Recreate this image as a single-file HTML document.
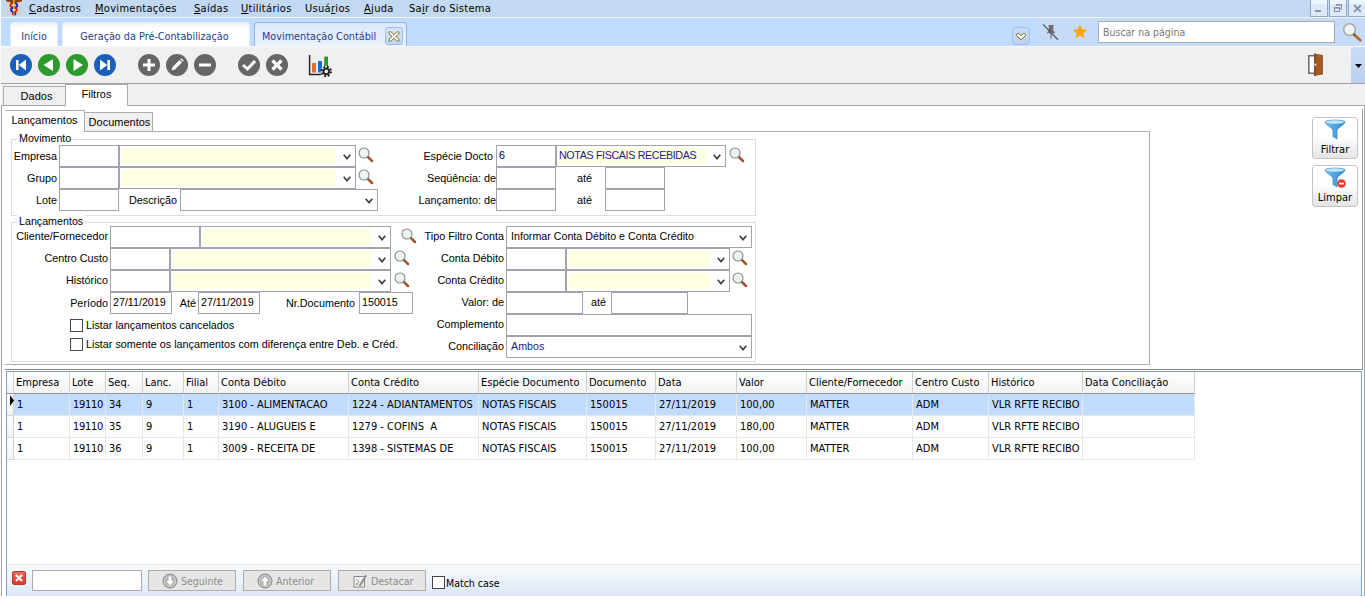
<!DOCTYPE html>
<html><head><meta charset="utf-8"><title>Movimentação Contábil</title>
<style>
*{box-sizing:border-box;margin:0;padding:0}
html,body{width:1365px;height:599px;overflow:hidden;background:#fff;font-family:"Liberation Sans",sans-serif;font-size:10.7px;color:#000}
.a{position:absolute}
.seg{font-family:"DejaVu Sans Condensed","Liberation Sans",sans-serif;font-size:10.5px}
#menubar{left:0;top:0;width:1365px;height:18px;background:#c3d9f1;border-bottom:1px solid #eef4fc}
#menubar span{position:absolute;top:1px;font-family:"DejaVu Sans Condensed","Liberation Sans",sans-serif;font-size:11px;letter-spacing:.3px;line-height:16px;white-space:nowrap;color:#000}
#tabbar{left:0;top:18px;width:1365px;height:28px;background:#bfdbff}
.ttab{position:absolute;top:4px;height:24px;border:1px solid #e2eeff;border-bottom:none;border-radius:4px 4px 0 0;background:linear-gradient(#f3f3f3,#fff 5px);font-family:"DejaVu Sans Condensed","Liberation Sans",sans-serif;font-size:10.75px;line-height:27px;color:#25408f;white-space:nowrap;text-align:center}
#toolbar{left:0;top:46px;width:1365px;height:37px;background:#f0f0f0;box-shadow:inset 0 1px 0 #f9f9f9}
#tbline{left:0;top:83px;width:1365px;height:1px;background:#a0a0a0}
#sub{left:0;top:84px;width:1365px;height:515px;background:#f0f0f0}
.lbl{position:absolute;white-space:nowrap;font-size:10.8px;line-height:13px;text-align:right}
.in{position:absolute;height:22px;border:1px solid #a3a3ad;background:#fff;font-size:10.7px;line-height:18px;padding-left:2px;white-space:nowrap;overflow:hidden}
.cb{position:absolute;height:22px;border:1px solid #a3a3ad;background:#fff}
.cb i{position:absolute;left:2px;top:2px;bottom:2px;right:19px;background:#ffffe1;font-style:normal;font-size:10.7px;line-height:15px;padding-left:1px;white-space:nowrap;color:#1a1a8c;overflow:hidden}
.cb.w i{background:#fff;padding-left:2px}
.cb svg{position:absolute;right:4px;top:8px}
.gb{position:absolute;border:1px solid #dcdcdc}
.gb>b{position:absolute;left:5px;top:-8px;background:#fff;padding:0 2px;font-weight:normal;font-size:10.7px;line-height:13px}
.mag{position:absolute;width:16px;height:16px}
.ck{position:absolute;width:13px;height:13px;border:1px solid #4a4a4a;background:#fff}
.tb{position:absolute;width:22px;height:22px;top:8px}
.gh{position:absolute;top:0;height:22px;border-right:1px solid #d0d0d0;border-bottom:1px solid #959595;background:linear-gradient(#ffffff,#f3f3f3);font-size:11px;line-height:21px;padding-left:2px;white-space:nowrap;overflow:hidden;font-family:"DejaVu Sans Condensed","Liberation Sans",sans-serif}
.gc{position:absolute;height:22px;border-right:1px solid #e8e8e8;border-bottom:1px solid #e8e8e8;font-size:11px;line-height:21px;padding-left:3px;white-space:nowrap;overflow:hidden}
.gfont{font-family:"Liberation Sans",sans-serif;}
.sbtn{position:absolute;top:5px;height:21px;border:1px solid #adadad;background:#e6e6e6;color:#8b8b8b;font-family:"DejaVu Sans Condensed","Liberation Sans",sans-serif;font-size:10.5px;line-height:19px;white-space:nowrap}
</style></head><body>
<div class="a" id="menubar">
<svg class="a" style="left:6px;top:0" width="16" height="16" viewBox="0 0 16 16"><rect width="16" height="16" fill="#d2d2d2"/><path d="M0 0 H16 V1.2 L11.5 2.6 L9 3.1 H6.6 L4.5 2.6 L0 1.2 Z" fill="#8b3d12"/><path d="M7.6 3.1 C3.6 3 3.4 6.9 7 7.4 C11.6 8 12 11 8.6 11.8 C6.4 12.4 6.2 13.8 7.8 14.9" stroke="#e41212" stroke-width="1.8" fill="none"/><path d="M8.4 3.3 C12.2 3.3 12.2 6.9 8.8 7.5 C4 8.2 3.8 11 7 11.8 C9.6 12.4 10.2 13.8 8.6 14.9" stroke="#1220e0" stroke-width="1.8" fill="none"/><path d="M7 7.4 C9 7.7 10 8 10.6 8.8" stroke="#e41212" stroke-width="1.8" fill="none"/><path d="M7.9 0 V12" stroke="#f2e200" stroke-width="1.1"/><path d="M7.9 12 V16" stroke="#f08a10" stroke-width="1.1"/></svg>
<span style="left:29px"><u>C</u>adastros</span>
<span style="left:95px"><u>M</u>ovimentações</span>
<span style="left:194px"><u>S</u>aídas</span>
<span style="left:241px"><u>U</u>tilitários</span>
<span style="left:305px">Usuá<u>r</u>ios</span>
<span style="left:364px"><u>A</u>juda</span>
<span style="left:409px">Sa<u>i</u>r do Sistema</span>
<div class="a" style="left:1310px;top:-1px;width:18px;height:18px;border:1px solid #93a8c6;background:linear-gradient(#ecf4fc 0,#ecf4fc 4px,#dde9f8 4px)"></div>
<div class="a" style="left:1329px;top:-1px;width:18px;height:18px;border:1px solid #93a8c6;background:linear-gradient(#ecf4fc 0,#ecf4fc 4px,#dde9f8 4px)"></div>
<div class="a" style="left:1348px;top:-1px;width:18px;height:18px;border:1px solid #93a8c6;background:linear-gradient(#ecf4fc 0,#ecf4fc 4px,#dde9f8 4px)"></div>
<div class="a" style="left:1315px;top:10px;width:6px;height:2px;background:#8391a8"></div>
<svg class="a" style="left:1333px;top:3px" width="11" height="10" viewBox="0 0 11 10" fill="none" stroke="#8391a8"><path d="M3.5 3 V1.5 H8.5 V6 H7" stroke-width="1"/><path d="M3.5 1.8h5" stroke-width="1.4"/><rect x="1.5" y="4.5" width="5" height="4" /><path d="M1.5 4.8h5" stroke-width="1.6"/></svg>
<svg class="a" style="left:1353px;top:4px" width="9" height="9" viewBox="0 0 9 9"><path d="M1.2 1.2 L7.8 7.8 M7.8 1.2 L1.2 7.8" stroke="#8391a8" stroke-width="1.9"/></svg>
</div>
<div class="a" id="tabbar">
<div class="ttab" style="left:10px;width:48px">Início</div>
<div class="ttab" style="left:62px;width:188px;padding-right:3px">Geração da Pré-Contabilização</div>
<div class="ttab" style="left:254px;width:153px;background:linear-gradient(#dce9fb,#eaf2fd);border-color:#8fb4ea;text-align:left;padding-left:7px">Movimentação Contábil</div>
<div class="a" style="left:385px;top:9px;width:18px;height:18px;border:1px solid #9dbbe6;border-radius:3px;background:linear-gradient(#d4e3f8,#c6d8f2)"></div>
<svg class="a" style="left:388px;top:13px" width="12" height="11" viewBox="0 0 12 11"><path d="M2.2 2 L9.8 9 M9.8 2 L2.2 9" stroke="#7a6f2a" stroke-width="3.4" stroke-linecap="round"/><path d="M2.2 2 L9.8 9 M9.8 2 L2.2 9" stroke="#fff" stroke-width="1.7" stroke-linecap="round"/></svg>
<div class="a" style="left:1037px;top:0;width:328px;height:28px;background:#c5dbf8"></div>
<div class="a" style="left:1012px;top:9px;width:18px;height:18px;border:1px solid #a3c0ea;border-radius:4px;background:linear-gradient(#c6dcf9,#bdd0ea)"></div>
<svg class="a" style="left:1015px;top:14px" width="12" height="9" viewBox="0 0 12 9"><path d="M6 7.8 L1.7 3.9 C0.7 2.4 2.6 0.6 4.1 1.8 L6 3.5 L7.9 1.8 C9.4 0.6 11.3 2.4 10.3 3.9 Z" fill="#fff" stroke="#7a6f2a" stroke-width="1" stroke-linejoin="round"/></svg>
<svg class="a" style="left:1041px;top:5px" width="20" height="18" viewBox="0 0 20 18"><path d="M7.2 2 H13 L12.3 3 V7.5 L14 9.5 V10.3 H6 V9.5 L7.8 7.5 V3 Z" fill="#6e6e6e"/><path d="M10 10 V15.7" stroke="#7d8ea6" stroke-width="1.6"/><path d="M2 1.4 L17 16.8" stroke="#5a5a5a" stroke-width="1.3"/></svg>
<svg class="a" style="left:1072px;top:6px" width="16" height="15" viewBox="0 0 16 15"><path d="M8 0.6 L10.1 5.3 L15.3 5.8 L11.4 9.2 L12.5 14.2 L8 11.6 L3.5 14.2 L4.6 9.2 L0.7 5.8 L5.9 5.3 Z" fill="#ffa40a"/></svg>
<div class="a seg" style="left:1098px;top:3px;width:237px;height:22px;border:1px solid #a9abb1;background:#fff;line-height:20px;color:#777;padding-left:4px">Buscar na página</div>
<svg class="a" style="left:1341px;top:3px" width="22" height="22" viewBox="0 0 22 22"><path d="M13 13.5 L19.3 19.3" stroke="#b5651d" stroke-width="2.6" stroke-linecap="round"/><path d="M12.4 12.9 L13.6 14.1" stroke="#5a3210" stroke-width="2.6"/><circle cx="8.5" cy="8.6" r="5.8" fill="#eef2f2" stroke="#9aa8a2" stroke-width="1.4"/></svg>
</div>
<div class="a" id="toolbar">
<svg class="tb" style="left:10px" viewBox="0 0 22 22"><circle cx="11" cy="11" r="11" fill="#1a5fb8"/><rect x="6" y="6" width="2.6" height="10" fill="#fff"/><path d="M16 5.5 V16.5 L8.8 11 Z" fill="#fff"/></svg>
<svg class="tb" style="left:38px" viewBox="0 0 22 22"><circle cx="11" cy="11" r="11" fill="#2c9a2c"/><path d="M15 5 V17 L5.5 11 Z" fill="#fff"/></svg>
<svg class="tb" style="left:66px" viewBox="0 0 22 22"><circle cx="11" cy="11" r="11" fill="#2c9a2c"/><path d="M7.5 5 V17 L17 11 Z" fill="#fff"/></svg>
<svg class="tb" style="left:94px" viewBox="0 0 22 22"><circle cx="11" cy="11" r="11" fill="#1a5fb8"/><rect x="13.4" y="6" width="2.6" height="10" fill="#fff"/><path d="M6 5.5 V16.5 L13.2 11 Z" fill="#fff"/></svg>
<svg class="tb" style="left:138px" viewBox="0 0 22 22"><circle cx="11" cy="11" r="11" fill="#666"/><path d="M11 5 V17 M5 11 H17" stroke="#fff" stroke-width="3"/></svg>
<svg class="tb" style="left:166px" viewBox="0 0 22 22"><circle cx="11" cy="11" r="11" fill="#666"/><path d="M5.5 16.5 L6.5 13 L13.5 6 L16 8.5 L9 15.5 Z" fill="#fff"/><path d="M14.3 5.2 L15.3 4.2 L17.8 6.7 L16.8 7.7 Z" fill="#fff"/></svg>
<svg class="tb" style="left:194px" viewBox="0 0 22 22"><circle cx="11" cy="11" r="11" fill="#666"/><path d="M5 11 H17" stroke="#fff" stroke-width="3"/></svg>
<svg class="tb" style="left:238px" viewBox="0 0 22 22"><circle cx="11" cy="11" r="11" fill="#666"/><path d="M5 11 L9.5 15 L17 7" stroke="#fff" stroke-width="3" fill="none"/></svg>
<svg class="tb" style="left:266px" viewBox="0 0 22 22"><circle cx="11" cy="11" r="11" fill="#666"/><path d="M6.5 6.5 L15.5 15.5 M15.5 6.5 L6.5 15.5" stroke="#fff" stroke-width="3.2"/></svg>
<svg class="a" style="left:308px;top:8px" width="25" height="24" viewBox="0 0 25 24"><path d="M1.6 1 V20.6 H13" stroke="#222" stroke-width="1.5" fill="none"/><rect x="4" y="9" width="4" height="9.6" rx=".6" fill="#f26a1b"/><rect x="10" y="7" width="4" height="11.6" rx=".6" fill="#2168d0"/><rect x="16.2" y="2.4" width="3.8" height="10" rx=".6" fill="#2c9a2c"/><circle cx="18.3" cy="17.4" r="5.6" fill="#f0f0f0"/><circle cx="18.3" cy="17.4" r="4.5" fill="none" stroke="#222" stroke-width="2.2" stroke-dasharray="1.9 1.634"/><circle cx="18.3" cy="17.4" r="3.7" fill="#222"/><circle cx="18.3" cy="17.4" r="1.8" fill="#f0f0f0"/></svg>
<svg class="a" style="left:1307px;top:6px" width="18" height="26" viewBox="0 0 18 26"><rect x="1.8" y="3.7" width="6" height="17.6" fill="#fff" stroke="#686868" stroke-width="1.5"/><path d="M7 1.5 L16 3 V22.5 L7 24 Z" fill="#a4592a"/><path d="M7 1.5 L9 1.8 V23.7 L7 24 Z" fill="#8e4a20"/><rect x="7.6" y="11.6" width="1.6" height="2" fill="#fff"/></svg>
<div class="a" style="left:1351px;top:1px;width:14px;height:36px;border-radius:3px 0 0 0;background:linear-gradient(#c8dcf6,#b9cfee)"></div>
<svg class="a" style="left:1355px;top:18px" width="7" height="4" viewBox="0 0 7 4"><path d="M0 0 H7 L3.5 4 Z" fill="#000"/></svg>
</div><div class="a" id="tbline"></div>
<div class="a" id="sub">
<div class="a" style="left:3px;top:2px;width:63px;height:20px;border:1px solid #acacac;border-bottom:none;background:#f0f0f0;font-size:11px;line-height:19px;text-align:center;padding-left:4px">Dados</div>
<div class="a" style="left:1px;top:21px;width:1364px;height:500px;border:1px solid #a6a6a6;background:#fff"></div>
<div class="a" style="left:1362px;top:25px;width:1px;height:260px;background:#9a9a9a"></div>
<div class="a" style="left:65px;top:0px;width:63px;height:22px;border:1px solid #acacac;border-bottom:none;background:#fff;font-size:11px;line-height:19px;text-align:center">Filtros</div>
<div class="a" style="left:5px;top:47px;width:1145px;height:234px;border:1px solid #acacac;border-left:none;background:#fff"></div>
<div class="a" style="left:84px;top:28px;width:69px;height:20px;border:1px solid #acacac;background:#f0f0f0;font-size:11px;line-height:19px;text-align:center;padding-left:2px">Documentos</div>
<div class="a" style="left:5px;top:26px;width:80px;height:22px;border:1px solid #acacac;border-bottom:none;border-left:none;background:#fff;font-size:11px;line-height:19px;text-align:center">Lançamentos</div>
<div class="gb" style="left:11px;top:55px;width:745px;height:77px"><b>Movimento</b></div>
<div class="gb" style="left:11px;top:138px;width:745px;height:140px"><b>Lançamentos</b></div>
<div class="lbl" style="right:1308px;top:66px">Empresa</div>
<div class="in" style="left:59px;top:61px;width:60px"></div>
<div class="cb " style="left:119px;top:61px;width:237px"><i></i><svg width="8" height="6" viewBox="0 0 8 6"><path d="M0.7 0.8 L4 4.6 L7.3 0.8" stroke="#444" stroke-width="1.7" fill="none"/></svg></div>
<svg class="mag" style="left:358px;top:63px" viewBox="0 0 16 16"><path d="M9.3 9.3 L14 14" stroke="#a4532a" stroke-width="2.5" stroke-linecap="round"/><circle cx="6" cy="6" r="5" fill="#eef4f2" stroke="#7f8c8c" stroke-width="1.1"/></svg>
<div class="lbl" style="right:1308px;top:88px">Grupo</div>
<div class="in" style="left:59px;top:83px;width:60px"></div>
<div class="cb " style="left:119px;top:83px;width:237px"><i></i><svg width="8" height="6" viewBox="0 0 8 6"><path d="M0.7 0.8 L4 4.6 L7.3 0.8" stroke="#444" stroke-width="1.7" fill="none"/></svg></div>
<svg class="mag" style="left:358px;top:85px" viewBox="0 0 16 16"><path d="M9.3 9.3 L14 14" stroke="#a4532a" stroke-width="2.5" stroke-linecap="round"/><circle cx="6" cy="6" r="5" fill="#eef4f2" stroke="#7f8c8c" stroke-width="1.1"/></svg>
<div class="lbl" style="right:1308px;top:110px">Lote</div>
<div class="in" style="left:59px;top:105px;width:60px"></div>
<div class="lbl" style="right:1188px;top:110px">Descrição</div>
<div class="cb w" style="left:180px;top:105px;width:198px"><i></i><svg width="8" height="6" viewBox="0 0 8 6"><path d="M0.7 0.8 L4 4.6 L7.3 0.8" stroke="#444" stroke-width="1.7" fill="none"/></svg></div>
<div class="lbl" style="right:872px;top:66px">Espécie Docto</div>
<div class="in" style="left:496px;top:61px;width:60px">6</div>
<div class="cb " style="left:556px;top:61px;width:170px"><i><span style="letter-spacing:-.35px;margin-left:-1px">NOTAS FISCAIS RECEBIDAS</span></i><svg width="8" height="6" viewBox="0 0 8 6"><path d="M0.7 0.8 L4 4.6 L7.3 0.8" stroke="#444" stroke-width="1.7" fill="none"/></svg></div>
<svg class="mag" style="left:729px;top:63px" viewBox="0 0 16 16"><path d="M9.3 9.3 L14 14" stroke="#a4532a" stroke-width="2.5" stroke-linecap="round"/><circle cx="6" cy="6" r="5" fill="#eef4f2" stroke="#7f8c8c" stroke-width="1.1"/></svg>
<div class="lbl" style="right:869px;top:88px">Seqüência: de</div>
<div class="in" style="left:496px;top:83px;width:60px"></div>
<div class="lbl" style="left:577px;top:88px">até</div>
<div class="in" style="left:605px;top:83px;width:60px"></div>
<div class="lbl" style="right:869px;top:110px">Lançamento: de</div>
<div class="in" style="left:496px;top:105px;width:60px"></div>
<div class="lbl" style="left:577px;top:110px">até</div>
<div class="in" style="left:605px;top:105px;width:60px"></div>
<div class="lbl" style="right:1257px;top:146px">Cliente/Fornecedor</div>
<div class="in" style="left:110px;top:142px;width:90px"></div>
<div class="cb " style="left:200px;top:142px;width:191px"><i></i><svg width="8" height="6" viewBox="0 0 8 6"><path d="M0.7 0.8 L4 4.6 L7.3 0.8" stroke="#444" stroke-width="1.7" fill="none"/></svg></div>
<svg class="mag" style="left:401px;top:144px" viewBox="0 0 16 16"><path d="M9.3 9.3 L14 14" stroke="#a4532a" stroke-width="2.5" stroke-linecap="round"/><circle cx="6" cy="6" r="5" fill="#eef4f2" stroke="#7f8c8c" stroke-width="1.1"/></svg>
<div class="lbl" style="right:1257px;top:168px">Centro Custo</div>
<div class="in" style="left:110px;top:164px;width:60px"></div>
<div class="cb " style="left:170px;top:164px;width:221px"><i></i><svg width="8" height="6" viewBox="0 0 8 6"><path d="M0.7 0.8 L4 4.6 L7.3 0.8" stroke="#444" stroke-width="1.7" fill="none"/></svg></div>
<svg class="mag" style="left:394px;top:166px" viewBox="0 0 16 16"><path d="M9.3 9.3 L14 14" stroke="#a4532a" stroke-width="2.5" stroke-linecap="round"/><circle cx="6" cy="6" r="5" fill="#eef4f2" stroke="#7f8c8c" stroke-width="1.1"/></svg>
<div class="lbl" style="right:1257px;top:190px">Histórico</div>
<div class="in" style="left:110px;top:186px;width:60px"></div>
<div class="cb " style="left:170px;top:186px;width:221px"><i></i><svg width="8" height="6" viewBox="0 0 8 6"><path d="M0.7 0.8 L4 4.6 L7.3 0.8" stroke="#444" stroke-width="1.7" fill="none"/></svg></div>
<svg class="mag" style="left:394px;top:188px" viewBox="0 0 16 16"><path d="M9.3 9.3 L14 14" stroke="#a4532a" stroke-width="2.5" stroke-linecap="round"/><circle cx="6" cy="6" r="5" fill="#eef4f2" stroke="#7f8c8c" stroke-width="1.1"/></svg>
<div class="lbl" style="right:1257px;top:213px">Período</div>
<div class="in" style="left:110px;top:208px;width:62px">27/11/2019</div>
<div class="lbl" style="right:1169px;top:213px">Até</div>
<div class="in" style="left:198px;top:208px;width:62px">27/11/2019</div>
<div class="lbl" style="right:1010px;top:213px">Nr.Documento</div>
<div class="in" style="left:359px;top:208px;width:54px">150015</div>
<div class="ck" style="left:70px;top:235px"></div><div class="lbl" style="left:86px;top:235px">Listar lançamentos cancelados</div>
<div class="ck" style="left:70px;top:254px"></div><div class="lbl" style="left:86px;top:254px">Listar somente os lançamentos com diferença entre Deb. e Créd.</div>
<div class="lbl" style="right:861px;top:146px">Tipo Filtro Conta</div>
<div class="cb w" style="left:506px;top:142px;width:246px"><i><span style="color:#000">Informar Conta Débito e Conta Crédito</span></i><svg width="8" height="6" viewBox="0 0 8 6"><path d="M0.7 0.8 L4 4.6 L7.3 0.8" stroke="#444" stroke-width="1.7" fill="none"/></svg></div>
<div class="lbl" style="right:861px;top:168px">Conta Débito</div>
<div class="in" style="left:506px;top:164px;width:60px"></div>
<div class="cb " style="left:566px;top:164px;width:164px"><i></i><svg width="8" height="6" viewBox="0 0 8 6"><path d="M0.7 0.8 L4 4.6 L7.3 0.8" stroke="#444" stroke-width="1.7" fill="none"/></svg></div>
<svg class="mag" style="left:732px;top:166px" viewBox="0 0 16 16"><path d="M9.3 9.3 L14 14" stroke="#a4532a" stroke-width="2.5" stroke-linecap="round"/><circle cx="6" cy="6" r="5" fill="#eef4f2" stroke="#7f8c8c" stroke-width="1.1"/></svg>
<div class="lbl" style="right:861px;top:190px">Conta Crédito</div>
<div class="in" style="left:506px;top:186px;width:60px"></div>
<div class="cb " style="left:566px;top:186px;width:164px"><i></i><svg width="8" height="6" viewBox="0 0 8 6"><path d="M0.7 0.8 L4 4.6 L7.3 0.8" stroke="#444" stroke-width="1.7" fill="none"/></svg></div>
<svg class="mag" style="left:732px;top:188px" viewBox="0 0 16 16"><path d="M9.3 9.3 L14 14" stroke="#a4532a" stroke-width="2.5" stroke-linecap="round"/><circle cx="6" cy="6" r="5" fill="#eef4f2" stroke="#7f8c8c" stroke-width="1.1"/></svg>
<div class="lbl" style="right:861px;top:212px">Valor: de</div>
<div class="in" style="left:506px;top:208px;width:77px"></div>
<div class="lbl" style="left:591px;top:212px">até</div>
<div class="in" style="left:611px;top:208px;width:77px"></div>
<div class="lbl" style="right:861px;top:234px">Complemento</div>
<div class="in" style="left:506px;top:230px;width:246px"></div>
<div class="lbl" style="right:861px;top:256px">Conciliação</div>
<div class="cb w" style="left:506px;top:252px;width:246px"><i>Ambos</i><svg width="8" height="6" viewBox="0 0 8 6"><path d="M0.7 0.8 L4 4.6 L7.3 0.8" stroke="#444" stroke-width="1.7" fill="none"/></svg></div>
<svg width="0" height="0" style="position:absolute"><defs><linearGradient id="fg" x1="0" x2="1"><stop offset="0" stop-color="#7cc3ee"/><stop offset=".5" stop-color="#4ea3dd"/><stop offset="1" stop-color="#3586c6"/></linearGradient></defs></svg>
<div class="a" style="left:1312px;top:33px;width:46px;height:42px;border:1px solid #c4c4c4;border-radius:3px;background:linear-gradient(#ffffff 45%,#e4e4e4);font-size:12px;text-align:center;line-height:14px;padding-top:25px;font-family:'DejaVu Sans Condensed','Liberation Sans',sans-serif;font-size:11px">Filtrar<svg class="a" style="left:11px;top:1px" width="23" height="22" viewBox="0 0 23 22"><path d="M1 3 C1 0.5 21 0.5 21 3 C21 5 14 9 13 11 V20 L9 17.5 V11 C8 9 1 5 1 3 Z" fill="url(#fg)" stroke="#3c8cc8" stroke-width="0.8"/><ellipse cx="11" cy="3" rx="9" ry="1.8" fill="#bfe3f8"/></svg></div>
<div class="a" style="left:1312px;top:81px;width:46px;height:42px;border:1px solid #c4c4c4;border-radius:3px;background:linear-gradient(#ffffff 45%,#e4e4e4);font-size:12px;text-align:center;line-height:14px;padding-top:25px;font-family:'DejaVu Sans Condensed','Liberation Sans',sans-serif;font-size:11px">Limpar<svg class="a" style="left:11px;top:1px" width="23" height="22" viewBox="0 0 23 22"><path d="M1 3 C1 0.5 21 0.5 21 3 C21 5 14 9 13 11 V20 L9 17.5 V11 C8 9 1 5 1 3 Z" fill="url(#fg)" stroke="#3c8cc8" stroke-width="0.8"/><ellipse cx="11" cy="3" rx="9" ry="1.8" fill="#bfe3f8"/><circle cx="17.5" cy="16.5" r="4.3" fill="#e8392c"/><rect x="15" y="15.7" width="5" height="1.7" fill="#fff"/></svg></div>
<div class="a" style="left:5px;top:285px;width:1358px;height:1px;background:#8c8c8c"></div>
<div class="a" style="left:6px;top:287px;width:1356px;height:240px;border:1px solid #7da2ce;background:#fff"></div>
<div class="a" style="left:0;top:288px;width:1365px;height:90px">
<div class="gh" style="left:7px;width:7px"></div>
<div class="gh" style="left:14px;width:56px">Empresa</div>
<div class="gh" style="left:70px;width:36px">Lote</div>
<div class="gh" style="left:106px;width:37px">Seq.</div>
<div class="gh" style="left:143px;width:41px">Lanc.</div>
<div class="gh" style="left:184px;width:35px">Filial</div>
<div class="gh" style="left:219px;width:130px">Conta Débito</div>
<div class="gh" style="left:349px;width:130px">Conta Crédito</div>
<div class="gh" style="left:479px;width:108px">Espécie Documento</div>
<div class="gh" style="left:587px;width:69px">Documento</div>
<div class="gh" style="left:656px;width:81px">Data</div>
<div class="gh" style="left:737px;width:70px">Valor</div>
<div class="gh" style="left:807px;width:106px">Cliente/Fornecedor</div>
<div class="gh" style="left:913px;width:76px">Centro Custo</div>
<div class="gh" style="left:989px;width:94px">Histórico</div>
<div class="gh" style="left:1083px;width:112px">Data Conciliação</div>
<div class="a" style="left:14px;top:22px;width:1181px;height:21px;background:#bfdcff"></div>
<div class="gc" style="left:7px;top:22px;width:7px;border-right-color:#d0d0d0;border-bottom-color:#d5d5d5;background:linear-gradient(#fff,#f3f3f3);padding:0"></div>
<div class="gc" style="left:14px;top:22px;width:56px;font-family:'DejaVu Sans Condensed','Liberation Sans',sans-serif;font-size:11px">1</div>
<div class="gc" style="left:70px;top:22px;width:36px;font-family:'DejaVu Sans Condensed','Liberation Sans',sans-serif;font-size:11px"><span style="letter-spacing:-.3px">19110</span></div>
<div class="gc" style="left:106px;top:22px;width:37px;font-family:'DejaVu Sans Condensed','Liberation Sans',sans-serif;font-size:11px">34</div>
<div class="gc" style="left:143px;top:22px;width:41px;font-family:'DejaVu Sans Condensed','Liberation Sans',sans-serif;font-size:11px">9</div>
<div class="gc" style="left:184px;top:22px;width:35px;font-family:'DejaVu Sans Condensed','Liberation Sans',sans-serif;font-size:11px">1</div>
<div class="gc" style="left:219px;top:22px;width:130px;font-family:'DejaVu Sans Condensed','Liberation Sans',sans-serif;font-size:11px">3100 - ALIMENTACAO</div>
<div class="gc" style="left:349px;top:22px;width:130px;font-family:'DejaVu Sans Condensed','Liberation Sans',sans-serif;font-size:11px">1224 - ADIANTAMENTOS</div>
<div class="gc" style="left:479px;top:22px;width:108px;font-family:'DejaVu Sans Condensed','Liberation Sans',sans-serif;font-size:11px">NOTAS FISCAIS</div>
<div class="gc" style="left:587px;top:22px;width:69px;font-family:'DejaVu Sans Condensed','Liberation Sans',sans-serif;font-size:11px">150015</div>
<div class="gc" style="left:656px;top:22px;width:81px;font-family:'DejaVu Sans Condensed','Liberation Sans',sans-serif;font-size:11px">27/11/2019</div>
<div class="gc" style="left:737px;top:22px;width:70px;font-family:'DejaVu Sans Condensed','Liberation Sans',sans-serif;font-size:11px">100,00</div>
<div class="gc" style="left:807px;top:22px;width:106px;font-family:'DejaVu Sans Condensed','Liberation Sans',sans-serif;font-size:11px">MATTER</div>
<div class="gc" style="left:913px;top:22px;width:76px;font-family:'DejaVu Sans Condensed','Liberation Sans',sans-serif;font-size:11px">ADM</div>
<div class="gc" style="left:989px;top:22px;width:94px;font-family:'DejaVu Sans Condensed','Liberation Sans',sans-serif;font-size:11px">VLR RFTE RECIBO</div>
<div class="gc" style="left:1083px;top:22px;width:112px;font-family:'DejaVu Sans Condensed','Liberation Sans',sans-serif;font-size:11px"></div>
<div class="gc" style="left:7px;top:44px;width:7px;border-right-color:#d0d0d0;border-bottom-color:#d5d5d5;background:linear-gradient(#fff,#f3f3f3);padding:0"></div>
<div class="gc" style="left:14px;top:44px;width:56px;font-family:'DejaVu Sans Condensed','Liberation Sans',sans-serif;font-size:11px">1</div>
<div class="gc" style="left:70px;top:44px;width:36px;font-family:'DejaVu Sans Condensed','Liberation Sans',sans-serif;font-size:11px"><span style="letter-spacing:-.3px">19110</span></div>
<div class="gc" style="left:106px;top:44px;width:37px;font-family:'DejaVu Sans Condensed','Liberation Sans',sans-serif;font-size:11px">35</div>
<div class="gc" style="left:143px;top:44px;width:41px;font-family:'DejaVu Sans Condensed','Liberation Sans',sans-serif;font-size:11px">9</div>
<div class="gc" style="left:184px;top:44px;width:35px;font-family:'DejaVu Sans Condensed','Liberation Sans',sans-serif;font-size:11px">1</div>
<div class="gc" style="left:219px;top:44px;width:130px;font-family:'DejaVu Sans Condensed','Liberation Sans',sans-serif;font-size:11px">3190 - ALUGUEIS E</div>
<div class="gc" style="left:349px;top:44px;width:130px;font-family:'DejaVu Sans Condensed','Liberation Sans',sans-serif;font-size:11px">1279 - COFINS&nbsp; A</div>
<div class="gc" style="left:479px;top:44px;width:108px;font-family:'DejaVu Sans Condensed','Liberation Sans',sans-serif;font-size:11px">NOTAS FISCAIS</div>
<div class="gc" style="left:587px;top:44px;width:69px;font-family:'DejaVu Sans Condensed','Liberation Sans',sans-serif;font-size:11px">150015</div>
<div class="gc" style="left:656px;top:44px;width:81px;font-family:'DejaVu Sans Condensed','Liberation Sans',sans-serif;font-size:11px">27/11/2019</div>
<div class="gc" style="left:737px;top:44px;width:70px;font-family:'DejaVu Sans Condensed','Liberation Sans',sans-serif;font-size:11px">180,00</div>
<div class="gc" style="left:807px;top:44px;width:106px;font-family:'DejaVu Sans Condensed','Liberation Sans',sans-serif;font-size:11px">MATTER</div>
<div class="gc" style="left:913px;top:44px;width:76px;font-family:'DejaVu Sans Condensed','Liberation Sans',sans-serif;font-size:11px">ADM</div>
<div class="gc" style="left:989px;top:44px;width:94px;font-family:'DejaVu Sans Condensed','Liberation Sans',sans-serif;font-size:11px">VLR RFTE RECIBO</div>
<div class="gc" style="left:1083px;top:44px;width:112px;font-family:'DejaVu Sans Condensed','Liberation Sans',sans-serif;font-size:11px"></div>
<div class="gc" style="left:7px;top:66px;width:7px;border-right-color:#d0d0d0;border-bottom-color:#d5d5d5;background:linear-gradient(#fff,#f3f3f3);padding:0"></div>
<div class="gc" style="left:14px;top:66px;width:56px;font-family:'DejaVu Sans Condensed','Liberation Sans',sans-serif;font-size:11px">1</div>
<div class="gc" style="left:70px;top:66px;width:36px;font-family:'DejaVu Sans Condensed','Liberation Sans',sans-serif;font-size:11px"><span style="letter-spacing:-.3px">19110</span></div>
<div class="gc" style="left:106px;top:66px;width:37px;font-family:'DejaVu Sans Condensed','Liberation Sans',sans-serif;font-size:11px">36</div>
<div class="gc" style="left:143px;top:66px;width:41px;font-family:'DejaVu Sans Condensed','Liberation Sans',sans-serif;font-size:11px">9</div>
<div class="gc" style="left:184px;top:66px;width:35px;font-family:'DejaVu Sans Condensed','Liberation Sans',sans-serif;font-size:11px">1</div>
<div class="gc" style="left:219px;top:66px;width:130px;font-family:'DejaVu Sans Condensed','Liberation Sans',sans-serif;font-size:11px">3009 - RECEITA DE</div>
<div class="gc" style="left:349px;top:66px;width:130px;font-family:'DejaVu Sans Condensed','Liberation Sans',sans-serif;font-size:11px">1398 - SISTEMAS DE</div>
<div class="gc" style="left:479px;top:66px;width:108px;font-family:'DejaVu Sans Condensed','Liberation Sans',sans-serif;font-size:11px">NOTAS FISCAIS</div>
<div class="gc" style="left:587px;top:66px;width:69px;font-family:'DejaVu Sans Condensed','Liberation Sans',sans-serif;font-size:11px">150015</div>
<div class="gc" style="left:656px;top:66px;width:81px;font-family:'DejaVu Sans Condensed','Liberation Sans',sans-serif;font-size:11px">27/11/2019</div>
<div class="gc" style="left:737px;top:66px;width:70px;font-family:'DejaVu Sans Condensed','Liberation Sans',sans-serif;font-size:11px">100,00</div>
<div class="gc" style="left:807px;top:66px;width:106px;font-family:'DejaVu Sans Condensed','Liberation Sans',sans-serif;font-size:11px">MATTER</div>
<div class="gc" style="left:913px;top:66px;width:76px;font-family:'DejaVu Sans Condensed','Liberation Sans',sans-serif;font-size:11px">ADM</div>
<div class="gc" style="left:989px;top:66px;width:94px;font-family:'DejaVu Sans Condensed','Liberation Sans',sans-serif;font-size:11px">VLR RFTE RECIBO</div>
<div class="gc" style="left:1083px;top:66px;width:112px;font-family:'DejaVu Sans Condensed','Liberation Sans',sans-serif;font-size:11px"></div>
<svg class="a" style="left:10px;top:23px" width="4" height="11" viewBox="0 0 4 11"><path d="M0 0 L4 5.5 L0 11 Z" fill="#000"/></svg>
</div>
<div class="a" style="left:0;top:512px;width:1365px;height:3px;background:#fff"></div>
<div class="a" style="left:7px;top:480px;width:1354px;height:32px;border-top:1px solid #ebe6e6;background:linear-gradient(#f9fbfe,#dce8f6)">
<div class="a" style="left:5px;top:6px;width:14px;height:14px;border:1px solid #b43a2e;border-radius:2px;background:linear-gradient(#ee6a5a,#d63a2c)"></div><svg class="a" style="left:8px;top:9px" width="8" height="8" viewBox="0 0 8 8"><path d="M1 1 L7 7 M7 1 L1 7" stroke="#fff" stroke-width="2"/></svg>
<div class="a" style="left:25px;top:5px;width:110px;height:21px;border:1px solid #a9abb1;background:#fff"></div>
<div class="sbtn" style="left:141px;width:88px"><svg class="a" style="left:13px;top:2px" width="16" height="16" viewBox="0 0 16 16"><circle cx="8" cy="8" r="7" fill="#b9b9b9" stroke="#8a8a8a"/><circle cx="8" cy="8" r="5.6" fill="none" stroke="#cfcfcf" stroke-width="1"/><path d="M6.2 3 H9.8 V7.6 H12.6 L8 13 L3.4 7.6 H6.2 Z" fill="#fff" stroke="#8f8f8f" stroke-width=".5"/></svg><span style="position:absolute;left:32px;top:1px">Seguinte</span></div>
<div class="sbtn" style="left:236px;width:88px"><svg class="a" style="left:13px;top:2px" width="16" height="16" viewBox="0 0 16 16"><circle cx="8" cy="8" r="7" fill="#b9b9b9" stroke="#8a8a8a"/><circle cx="8" cy="8" r="5.6" fill="none" stroke="#cfcfcf" stroke-width="1"/><path d="M6.2 13 H9.8 V8.4 H12.6 L8 3 L3.4 8.4 H6.2 Z" fill="#fff" stroke="#8f8f8f" stroke-width=".5"/></svg><span style="position:absolute;left:32px;top:1px">Anterior</span></div>
<div class="sbtn" style="left:331px;width:88px"><svg class="a" style="left:14px;top:3px" width="14" height="14" viewBox="0 0 14 14"><rect x="1" y="2.5" width="10.5" height="10.5" fill="#f2f2f2" stroke="#8a8a8a"/><path d="M3 5 L6 8 M3 9 L5 11 M3 11 L6 8" stroke="#a0a0a0" stroke-width="1" fill="none"/><path d="M6.5 10.5 L12.5 1 L13.5 1.8 L8 11.5 L6.2 12 Z" fill="#9a9a9a" stroke="#7a7a7a" stroke-width=".5"/></svg><span style="position:absolute;left:32px;top:1px">Destacar</span></div>
<div class="ck" style="left:425px;top:11px;border-color:#444"></div><div class="a seg" style="left:439px;top:11px;line-height:14px;white-space:nowrap">Match case</div>
</div>
</div>
<div class="a" style="left:0;top:0;width:1px;height:599px;background:#fafafa"></div>
</body></html>
